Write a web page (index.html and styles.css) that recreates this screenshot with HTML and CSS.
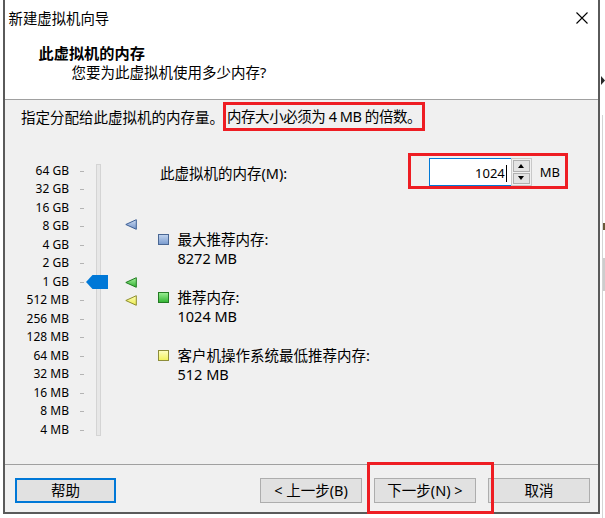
FILE: index.html
```html
<!DOCTYPE html>
<html lang="zh-CN">
<head>
<meta charset="utf-8">
<title>新建虚拟机向导</title>
<link rel="stylesheet" href="styles.css">
</head>
<body>
<div class="screen">
  <div class="window">
    <div class="top">
      <div class="titlebar">
        <span class="title">新建虚拟机向导</span>
        <span class="close"><svg width="12" height="12" viewBox="0 0 12 12"><path d="M0.5 0.5L11.5 11.5M11.5 0.5L0.5 11.5" stroke="#000" stroke-width="1.1" fill="none"/></svg></span>
      </div>
      <div class="heading">此虚拟机的内存</div>
      <div class="subheading">您要为此虚拟机使用多少内存?</div>
    </div>
    <div class="body">
      <div class="intro">指定分配给此虚拟机的内存量。<span class="mark">内存大小必须为 4 MB 的倍数。</span></div>
      <div class="main">
        <div class="slider">
          <span class="lbl r1">64 GB</span><span class="tick r1"></span>
          <span class="lbl r2">32 GB</span><span class="tick r2"></span>
          <span class="lbl r3">16 GB</span><span class="tick r3"></span>
          <span class="lbl r4">8 GB</span><span class="tick r4"></span>
          <span class="lbl r5">4 GB</span><span class="tick r5"></span>
          <span class="lbl r6">2 GB</span><span class="tick r6"></span>
          <span class="lbl r7">1 GB</span><span class="tick r7"></span>
          <span class="lbl r8">512 MB</span><span class="tick r8"></span>
          <span class="lbl r9">256 MB</span><span class="tick r9"></span>
          <span class="lbl r10">128 MB</span><span class="tick r10"></span>
          <span class="lbl r11">64 MB</span><span class="tick r11"></span>
          <span class="lbl r12">32 MB</span><span class="tick r12"></span>
          <span class="lbl r13">16 MB</span><span class="tick r13"></span>
          <span class="lbl r14">8 MB</span><span class="tick r14"></span>
          <span class="lbl r15">4 MB</span><span class="tick r15"></span>
          <span class="track"></span>
          <svg class="thumb" width="22" height="14" viewBox="0 0 22 14"><path d="M0 7L6.5 0H22V14H6.5Z" fill="#0078d7"/></svg>
          <svg class="tri tri-max" width="12" height="11" viewBox="0 0 12 11"><defs><linearGradient id="tb" x1="0" y1="0" x2="0" y2="1"><stop offset="0" stop-color="#cddcf2"/><stop offset="1" stop-color="#7293c8"/></linearGradient></defs><path d="M0.8 5.5L11.3 0.7V10.3Z" fill="url(#tb)" stroke="#3d5f96" stroke-linejoin="round"/></svg>
          <svg class="tri tri-rec" width="12" height="11" viewBox="0 0 12 11"><defs><linearGradient id="tg" x1="0" y1="0" x2="0" y2="1"><stop offset="0" stop-color="#a8f0a0"/><stop offset="1" stop-color="#2fb02f"/></linearGradient></defs><path d="M0.8 5.5L11.3 0.7V10.3Z" fill="url(#tg)" stroke="#1f7d1f" stroke-linejoin="round"/></svg>
          <svg class="tri tri-min" width="12" height="11" viewBox="0 0 12 11"><defs><linearGradient id="ty" x1="0" y1="0" x2="0" y2="1"><stop offset="0" stop-color="#ffffb8"/><stop offset="1" stop-color="#e9e94a"/></linearGradient></defs><path d="M0.8 5.5L11.3 0.7V10.3Z" fill="url(#ty)" stroke="#8e8e2c" stroke-linejoin="round"/></svg>
        </div>
        <div class="details">
          <div class="mem-row">
            <span class="mem-label">此虚拟机的内存(M):</span>
            <div class="mem-box">
              <div class="spin-input">1024<span class="caret"></span></div>
              <div class="spin-buttons"><span class="spin-btn up"></span><span class="spin-btn down"></span></div>
              <span class="unit">MB</span>
            </div>
          </div>
          <ul class="legend">
            <li class="legend-item"><span class="swatch swatch-max"></span><div class="legend-text"><div>最大推荐内存:</div><div>8272 MB</div></div></li>
            <li class="legend-item"><span class="swatch swatch-rec"></span><div class="legend-text"><div>推荐内存:</div><div>1024 MB</div></div></li>
            <li class="legend-item"><span class="swatch swatch-min"></span><div class="legend-text"><div>客户机操作系统最低推荐内存:</div><div>512 MB</div></div></li>
          </ul>
        </div>
      </div>
    </div>
    <div class="footer">
      <button class="btn btn-default">帮助</button>
      <div class="nav">
        <button class="btn">&lt; 上一步(B)</button>
        <button class="btn">下一步(N) &gt;</button>
        <button class="btn">取消</button>
      </div>
    </div>
    <div class="annot"></div>
  </div>
  <div class="strip">
    <span class="strip-mark"></span>
    <div class="strip-rail">
      <span class="strip-dot"></span>
      <span class="strip-block"></span>
    </div>
  </div>
</div>
</body>
</html>
```

FILE: styles.css
```css
html, body {
  margin: 0;
  padding: 0;
  background: #ffffff;
}

.screen {
  width: 605px;
  height: 518px;
  display: flex;
  overflow: hidden;
  background: #ffffff;
  font-family: "Noto Sans", "Noto Sans CJK SC", sans-serif;
  font-size: 14.5px;
  color: #000;
}

.window {
  position: relative;
  margin-left: 3px;
  width: 597px;
  height: 514px;
  box-sizing: border-box;
  border-left: 2px solid #5a5a5a;
  border-right: 2px solid #5a5a5a;
  border-bottom: 2px solid #5a5a5a;
  display: flex;
  flex-direction: column;
  flex-shrink: 0;
}

/* header */
.top {
  height: 100px;
  box-sizing: border-box;
  background: #ffffff;
  border-bottom: 1px solid #a0a0a0;
}

.titlebar {
  height: 35px;
  display: flex;
  align-items: center;
  justify-content: space-between;
  padding: 0 10.5px 0 3.5px;
}

.title {
  font-family: "Noto Sans CJK SC", sans-serif;
  font-size: 14.4px;
  line-height: 20px;
}

.close {
  display: flex;
  width: 12px;
  height: 12px;
}

.heading {
  margin-top: 6.5px;
  padding-left: 33.5px;
  font-family: "Noto Sans CJK SC", sans-serif;
  font-weight: 700;
  font-size: 15.2px;
  line-height: 20px;
}

.subheading {
  padding-left: 66.5px;
  line-height: 20px;
}

/* body */
.body {
  flex: 1;
  display: flex;
  flex-direction: column;
  background: #f0f0f0;
}

.intro {
  margin-top: 2px;
  height: 29px;
  padding-left: 16px;
  display: flex;
  align-items: center;
  white-space: nowrap;
}

.mark {
  border: 3px solid #ee1d23;
  padding: 0 1px 0 1px;
  margin-left: -1px;
  line-height: 23px;
  letter-spacing: -0.45px;
}

.main {
  flex: 1;
  display: flex;
  align-items: flex-start;
}

/* slider */
.slider {
  margin-top: 30.75px;
  display: grid;
  grid-template-columns: 64px 17px 22px 17px 12px;
  grid-template-rows: repeat(15, 18.5px);
}

.lbl {
  grid-column: 1;
  text-align: right;
  font-size: 12px;
  line-height: 18.5px;
  white-space: nowrap;
}

.tick {
  grid-column: 2;
  align-self: center;
  justify-self: start;
  margin-left: 11px;
  width: 4px;
  height: 1px;
  background: #b4b4b4;
}

.r1 { grid-row: 1; }
.r2 { grid-row: 2; }
.r3 { grid-row: 3; }
.r4 { grid-row: 4; }
.r5 { grid-row: 5; }
.r6 { grid-row: 6; }
.r7 { grid-row: 7; }
.r8 { grid-row: 8; }
.r9 { grid-row: 9; }
.r10 { grid-row: 10; }
.r11 { grid-row: 11; }
.r12 { grid-row: 12; }
.r13 { grid-row: 13; }
.r14 { grid-row: 14; }
.r15 { grid-row: 15; }

.track {
  grid-column: 3;
  grid-row: 1 / -1;
  justify-self: start;
  margin: 2.25px 0 3.25px 10px;
  width: 5px;
  box-sizing: border-box;
  background: #e7e7e7;
  border: 1px solid #d4d4d4;
}

.thumb {
  grid-column: 3;
  grid-row: 7;
  align-self: center;
  display: block;
}

.tri {
  grid-column: 5;
  align-self: center;
  display: block;
}

.tri-max { grid-row: 4; margin-top: -4px; }
.tri-rec { grid-row: 7; }
.tri-min { grid-row: 8; }

/* details */
.details {
  margin-top: 22px;
  margin-left: 20.5px;
  width: 410.5px;
}

.mem-row {
  display: flex;
  align-items: flex-start;
}

.mem-label {
  margin: 10px 0 0 2.5px;
  line-height: 20px;
  white-space: nowrap;
}

.mem-box {
  margin-left: auto;
  width: 160px;
  height: 36px;
  box-sizing: border-box;
  border: 3px solid #ee1d23;
  padding: 2px 5px 0 18px;
  display: flex;
  align-items: flex-start;
}

.spin-input {
  width: 82px;
  height: 28px;
  box-sizing: border-box;
  background: #fff;
  border: 1px solid #0078d7;
  border-right: 0;
  padding-right: 4px;
  display: flex;
  align-items: center;
  justify-content: flex-end;
  font-size: 13px;
  line-height: 26px;
  padding-top: 2px;
}

.caret {
  display: inline-block;
  width: 1px;
  height: 17px;
  margin-left: 1px;
  background: #000;
}

.spin-buttons {
  width: 21px;
  height: 28px;
  box-sizing: border-box;
  border: 1px solid #c8c8c8;
  padding: 1px;
  display: flex;
  flex-direction: column;
  gap: 1px;
  background: #f0f0f0;
}

.spin-btn {
  flex: 1;
  background: #e3e3e3;
  border: 1px solid #b0b0b0;
  display: flex;
  align-items: center;
  justify-content: center;
}

.spin-btn::after {
  content: "";
  width: 0;
  height: 0;
  border-left: 3.5px solid transparent;
  border-right: 3.5px solid transparent;
}

.spin-btn.up::after { border-bottom: 4px solid #000; }
.spin-btn.down::after { border-top: 4px solid #000; }

.unit {
  margin-left: 8px;
  font-size: 13px;
  line-height: 29px;
}

.legend {
  list-style: none;
  margin: 41px 0 0 0;
  padding: 0;
  display: flex;
  flex-direction: column;
  gap: 21px;
}

.legend-item {
  display: flex;
  align-items: flex-start;
}

.legend-text {
  line-height: 18.5px;
  white-space: nowrap;
}

.swatch {
  width: 11px;
  height: 11px;
  box-sizing: border-box;
  margin: 4px 9px 0 0;
  border: 1px solid #4a6794;
  flex-shrink: 0;
}

.swatch-max {
  background: linear-gradient(#bfd2ee, #7c9dcf);
  border-color: #4a6794;
}

.swatch-rec {
  background: linear-gradient(#96ec90, #36b636);
  border-color: #237a23;
}

.swatch-min {
  background: linear-gradient(#ffffbe, #f2f25e);
  border-color: #8d8d3a;
}

/* footer */
.footer {
  height: 48px;
  box-sizing: border-box;
  border-top: 1px solid #a0a0a0;
  background: #f0f0f0;
  padding: 13px 8px 0 10px;
  display: flex;
  justify-content: space-between;
  align-items: flex-start;
}

.nav {
  display: flex;
  gap: 12px;
}

.btn {
  width: 102px;
  height: 25px;
  box-sizing: border-box;
  padding: 0;
  margin: 0;
  background: #e1e1e1;
  border: 1px solid #adadad;
  font-family: "Noto Sans", "Noto Sans CJK SC", sans-serif;
  font-size: 14.5px;
  line-height: 21px;
  color: #000;
}

.btn-default {
  width: 101px;
  border: 2px solid #0078d7;
}

.annot {
  position: absolute;
  left: 362px;
  top: 462px;
  width: 127px;
  height: 52px;
  box-sizing: border-box;
  border: 3px solid #ee1d23;
}

/* outside strip */
.strip {
  flex: 1;
  display: flex;
  flex-direction: column;
}

.strip-mark {
  margin: 76px 0 0 1px;
  width: 4px;
  height: 9px;
  background: #2a2a2a;
  clip-path: polygon(0 0, 100% 50%, 0 100%);
}

.strip-rail {
  margin: 30px 0 0 2px;
  flex: 1;
  border-left: 1px solid #d4d4d4;
  display: flex;
  flex-direction: column;
}

.strip-dot {
  margin-top: 108px;
  height: 7px;
  width: 3px;
  background: #6a5a3a;
}

.strip-block {
  margin-top: 28px;
  height: 33px;
  width: 3px;
  background: #cdcdcd;
}
```
